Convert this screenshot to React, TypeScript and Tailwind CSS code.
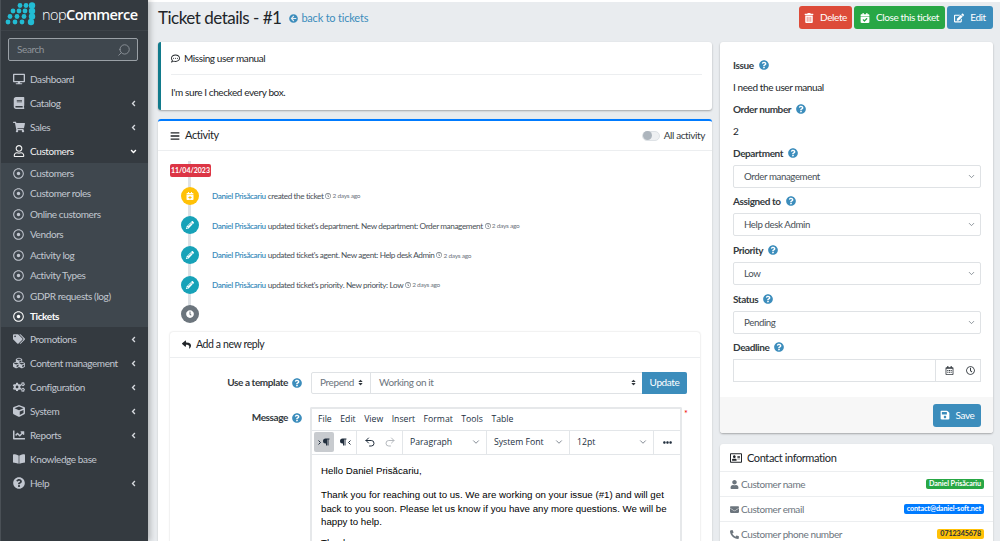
import React from "react";
import {
  FaDesktop, FaBook, FaShoppingCart, FaRegUser, FaTags, FaCubes, FaCogs, FaCube, FaChartLine, FaBookOpen, FaQuestionCircle,
  FaAngleLeft, FaAngleDown, FaRegDotCircle, FaTrashAlt, FaCalendarCheck, FaEdit, FaArrowCircleLeft, FaRegCommentDots, FaBars,
  FaCalendarPlus, FaPencilAlt, FaClock, FaReply, FaRegClock, FaRegCalendarAlt, FaSave, FaRegAddressCard, FaUser, FaEnvelope, FaPhone, FaEllipsisH, FaParagraph, FaSort,
} from "react-icons/fa";
import { ChevronDown, Search, Undo2, Redo2 } from "lucide-react";

function Logo() {
  const rows = [
    { y: 4.5, xs: [16, 22, 28] },
    { y: 10, xs: [9, 15, 21, 28] },
    { y: 15.5, xs: [6, 13, 20, 28] },
    { y: 21, xs: [4, 11, 18, 27] },
  ];
  return (
    <svg width="36" height="28" viewBox="0 0 36 28" className="shrink-0">
      {rows.map((r) =>
        r.xs.map((x) => (
          <circle key={`${x}-${r.y}`} cx={x} cy={r.y} r={x > 26 ? 3.2 : 2.4} fill="#22bcd4" />
        ))
      )}
    </svg>
  );
}

function NavItem({ icon, label, arrow, open }: { icon: React.ReactNode; label: string; arrow?: boolean; open?: boolean }) {
  return (
    <div className={`h-6 flex items-center pl-[12px] pr-[10px] text-[10px] ${open ? "text-[#f2f2f2]" : "text-[#c2c7d0]"}`}>
      <span className="w-[12px] h-3 flex items-center justify-center text-[12px] shrink-0">{icon}</span>
      <span className="ml-[5px] flex-1 whitespace-nowrap">{label}</span>
      {arrow && (open ? <FaAngleDown className="text-[9px] text-white" /> : <FaAngleLeft className="text-[9px] text-[#d5d8dd]" />)}
    </div>
  );
}

function SubItem({ label, active }: { label: string; active?: boolean }) {
  return (
    <div className={`h-[20.5px] flex items-center pl-[12px] text-[10px] ${active ? "text-white font-bold" : "text-[#c2c7d0]"}`}>
      <FaRegDotCircle className="text-[11px] w-[11px] shrink-0" />
      <span className="ml-[6px] whitespace-nowrap">{label}</span>
    </div>
  );
}

function Sidebar() {
  return (
    <aside className="w-[148px] shrink-0 h-full bg-[#343a40] shadow-[2px_0_6px_rgba(0,0,0,0.25)] z-10 flex flex-col border-l border-[#4a5056]">
      <div className="h-[31px] flex items-center pl-[3px] border-b border-[#3d4349]">
        <Logo />
        <span className="text-[14.5px] text-white ml-[2px] whitespace-nowrap font-['Open_Sans',sans-serif] tracking-[-0.55px]">
          <span className="font-light">nop</span><span className="font-semibold">Commerce</span>
        </span>
      </div>
      <div className="mt-[7px] ml-[7px] mr-[10px] h-[23px] border border-[#9aa0a6] rounded-[2px] bg-[#3f474e] flex items-center pl-2 pr-1.5 text-[10px] text-[#8f959b]">
        <span className="flex-1">Search</span>
        <Search size={14} strokeWidth={1.5} className="-scale-x-100" />
      </div>
      <div className="mt-[6px]">
        <NavItem icon={<FaDesktop />} label="Dashboard" />
        <NavItem icon={<FaBook />} label="Catalog" arrow />
        <NavItem icon={<FaShoppingCart />} label="Sales" arrow />
        <NavItem icon={<FaRegUser />} label="Customers" arrow open />
        <div className="bg-[#3f474e]">
          {["Customers", "Customer roles", "Online customers", "Vendors", "Activity log", "Activity Types", "GDPR requests (log)"].map((l) => (
            <SubItem key={l} label={l} />
          ))}
          <SubItem label="Tickets" active />
        </div>
        <NavItem icon={<FaTags />} label="Promotions" arrow />
        <NavItem icon={<FaCubes />} label="Content management" arrow />
        <NavItem icon={<FaCogs />} label="Configuration" arrow />
        <NavItem icon={<FaCube />} label="System" arrow />
        <NavItem icon={<FaChartLine />} label="Reports" arrow />
        <NavItem icon={<FaBookOpen />} label="Knowledge base" />
        <NavItem icon={<FaQuestionCircle />} label="Help" arrow />
      </div>
    </aside>
  );
}

function Help() {
  return <FaQuestionCircle className="text-[#3c8dbc] text-[10px] shrink-0" />;
}

function Btn({ color, icon, label, w }: { color: string; icon: React.ReactNode; label: string; w: string }) {
  return (
    <div className={`h-[23px] rounded-[3px] text-white text-[10px] flex items-center justify-center gap-[6px] whitespace-nowrap ${color} ${w}`}>
      <span className="text-[10px]">{icon}</span>
      {label}
    </div>
  );
}

function TimelineRow({ color, icon, children }: { color: string; icon: React.ReactNode; children?: React.ReactNode }) {
  return (
    <div className="h-[29.6px] flex items-center">
      <div className={`w-[18px] h-[18px] rounded-full flex items-center justify-center text-white text-[8px] shrink-0 ${color}`}>{icon}</div>
      <div className="ml-[13px] text-[8.2px] text-[#495057] whitespace-nowrap flex items-center pt-[1px]">{children}</div>
    </div>
  );
}

function Entry({ text }: { text: string }) {
  return (
    <>
      <span className="text-[#3c8dbc] font-semibold">Daniel Prisăcariu</span>
      <span className="ml-[2px]">{text}</span>
      <FaRegClock className="ml-[2px] text-[6px] text-[#6c757d]" />
      <span className="ml-[1px] text-[6.5px] text-[#6c757d] tracking-[-0.25px]">2 days ago</span>
    </>
  );
}

function Chev({ flip }: { flip?: boolean }) {
  return (
    <svg width="3" height="5" viewBox="0 0 3 5" className={flip ? "rotate-180" : ""}>
      <path d="M0.5 0.5 L2.5 2.5 L0.5 4.5" fill="none" stroke="currentColor" strokeWidth="1" />
    </svg>
  );
}

function ToolSelect({ label, w }: { label: string; w: string }) {
  return (
    <div className={`border-r border-[#e3e6e9] h-full flex items-center pl-[7px] pr-[5px] justify-between ${w}`}>
      <span>{label}</span>
      <ChevronDown size={10} className="text-[#6b7480]" />
    </div>
  );
}

function Editor() {
  const seg = "border-r border-[#e3e6e9] h-full flex items-center";
  return (
    <div className="w-[372px] h-[200px] border-2 border-[#e6e8ea] border-b-0 rounded-t-[2px] bg-white overflow-hidden tracking-normal">
      <div className="h-[22px] flex items-center gap-[8.5px] pl-[6px] text-[8.7px] text-[#222f3e] border-b border-[#e3e6e9] font-['Open_Sans',sans-serif]">
        {["File", "Edit", "View", "Insert", "Format", "Tools", "Table"].map((m) => (
          <span key={m}>{m}</span>
        ))}
      </div>
      <div className="h-[24px] flex items-center text-[8.7px] text-[#222f3e] border-b border-[#e3e6e9] font-['Open_Sans',sans-serif]">
        <div className={`${seg} w-[45px] pl-[2px] gap-[1px]`}>
          <span className="w-5 h-5 bg-[#c8cbcf] rounded-[2px] flex items-center justify-center text-[8px] gap-[1px]"><Chev /><FaParagraph /></span>
          <span className="w-5 h-5 flex items-center justify-center text-[8px] gap-[1px]"><FaParagraph /><Chev flip /></span>
        </div>
        <div className={`${seg} w-[46px] pl-[7px] gap-[8px]`}>
          <Undo2 size={12} />
          <Redo2 size={12} className="text-[#b4b8bd]" />
        </div>
        <ToolSelect label="Paragraph" w="w-[84px]" />
        <ToolSelect label="System Font" w="w-[83px]" />
        <ToolSelect label="12pt" w="w-[84px]" />
        <div className="flex-1 flex items-center justify-center"><FaEllipsisH className="text-[9px]" /></div>
      </div>
      <div className="pt-[9px] px-[9px] text-[9.7px] leading-[13.5px] text-black font-['Liberation_Sans',sans-serif]">
        <p>Hello Daniel Prisăcariu,</p>
        <p className="mt-[11px]">Thank you for reaching out to us. We are working on your issue (#1) and will get back to you soon. Please let us know if you have any more questions. We will be happy to help.</p>
        <p className="mt-[7px]">Thanks</p>
      </div>
    </div>
  );
}

function Field({ label, children }: { label: string; children: React.ReactNode }) {
  return (
    <div>
      <div className="h-[14px] flex items-center gap-[5px] text-[10px] font-bold text-[#343a40]">
        {label} <Help />
      </div>
      {children}
    </div>
  );
}

function Select({ value }: { value: string }) {
  return (
    <div className="mt-[5px] h-[23px] border border-[#dfe2e5] rounded-[2px] flex items-center pl-2.5 pr-1 text-[9.7px] text-[#495057]">
      <span className="flex-1">{value}</span>
      <ChevronDown size={9} strokeWidth={2} className="text-[#6c757d]" />
    </div>
  );
}

function ContactRow({ icon, label, badge, color, dark }: { icon: React.ReactNode; label: string; badge: string; color: string; dark?: boolean }) {
  return (
    <div className="h-[25px] border-t border-[#eceef0] flex items-center pl-[10px] pr-[9px] text-[10px] text-[#6c757d]">
      <span className="text-[9px] w-[9px]">{icon}</span>
      <span className="ml-[2px] flex-1">{label}</span>
      <span className={`h-[10px] px-[3px] rounded-[2px] flex items-center text-[7.2px] font-bold tracking-[-0.1px] ${color} ${dark ? "text-[#1f2d3d]" : "text-white"}`}>{badge}</span>
    </div>
  );
}

export default function App() {
  return (
    <div className="w-[1000px] h-[541px] overflow-hidden flex bg-[#e9ecef] tracking-[-0.4px] font-['Lato','Noto_Sans',sans-serif]">
      <Sidebar />
      <main className="flex-1 min-w-0 h-full pl-[10px] pr-[7px] border-t-2 border-white">
        <div className="h-[40px] flex items-start">
          <div className="flex items-center mt-[4px]">
            <h1 className="text-[17px] leading-6 text-[#212529] whitespace-nowrap tracking-[-0.5px]">Ticket details - #1</h1>
            <FaArrowCircleLeft className="ml-[8px] text-[9px] text-[#3c8dbc]" />
            <span className="ml-[3px] text-[11px] text-[#3c8dbc] whitespace-nowrap tracking-[-0.2px]">back to tickets</span>
          </div>
          <div className="ml-auto flex gap-[2px] mt-[4px]">
            <Btn color="bg-[#dd4b39]" icon={<FaTrashAlt />} label="Delete" w="w-[53px]" />
            <Btn color="bg-[#28a745]" icon={<FaCalendarCheck />} label="Close this ticket" w="w-[91px]" />
            <Btn color="bg-[#3c8dbc]" icon={<FaEdit />} label="Edit" w="w-[46px]" />
          </div>
        </div>
        <div className="flex gap-2">
          <div className="w-[554px] shrink-0">
            <section className="h-[68px] bg-white rounded-[3px] border-l-[3px] border-[#117a8b] shadow-[0_1px_2px_rgba(0,0,0,0.3)] px-[10px] text-[10px] text-[#212529]">
              <div className="h-[33px] flex items-center gap-[4px] border-b border-[#eceef0]">
                <FaRegCommentDots className="text-[9px]" /> Missing user manual
              </div>
              <div className="h-[34px] flex items-center">I'm sure I checked every box.</div>
            </section>
            <section className="mt-[9px] h-[430px] bg-white rounded-t-[3px] border-t-2 border-[#007bff] shadow-[0_1px_2px_rgba(0,0,0,0.2)]">
              <div className="h-[30px] flex items-center pl-3 pr-[7px] border-b border-[#eceef0] text-[#212529]">
                <FaBars className="text-[10px]" />
                <span className="ml-[5px] text-[11px] flex-1">Activity</span>
                <span className="w-[18px] h-[10px] rounded-full border border-[#dee2e6] bg-[#eef0f2] flex items-center">
                  <span className="w-[9px] h-[9px] rounded-full bg-[#adb5bd]" />
                </span>
                <span className="ml-[4px] text-[10px] text-[#343a40]">All activity</span>
              </div>
              <div className="px-3 relative">
                <div className="absolute left-[30px] top-[10px] h-[150px] w-[3px] bg-[#dee2e6]" />
                <div className="relative pt-[13px]">
                  <div className="w-[41px] h-[13px] bg-[#dc3545] rounded-[2px] text-white text-[7px] font-bold tracking-normal flex items-center justify-center">11/04/2023</div>
                  <div className="pl-[11px] mt-[4px]">
                    <TimelineRow color="bg-[#ffc107]" icon={<FaCalendarPlus />}><Entry text="created the ticket" /></TimelineRow>
                    <TimelineRow color="bg-[#17a2b8]" icon={<FaPencilAlt />}><Entry text="updated ticket's department. New department: Order management" /></TimelineRow>
                    <TimelineRow color="bg-[#17a2b8]" icon={<FaPencilAlt />}><Entry text="updated ticket's agent. New agent: Help desk Admin" /></TimelineRow>
                    <TimelineRow color="bg-[#17a2b8]" icon={<FaPencilAlt />}><Entry text="updated ticket's priority. New priority: Low" /></TimelineRow>
                    <TimelineRow color="bg-[#6c757d]" icon={<FaClock />} />
                  </div>
                </div>
                <div className="relative mt-[3px] bg-white rounded-[3px] shadow-[0_0_2px_rgba(0,0,0,0.2)]">
                  <div className="h-[26px] flex items-center pl-[12px] gap-[5px] pt-[1px] border-b border-[#eceef0] text-[10.5px] text-[#212529]">
                    <FaReply className="text-[9px]" /> Add a new reply
                  </div>
                  <div className="flex items-center mt-[14px] h-[22px]">
                    <div className="w-[132px] flex justify-end items-center gap-[4px] text-[10px] font-bold text-[#343a40]">Use a template <Help /></div>
                    <div className="ml-[9px] flex h-[22px] w-[376px] border border-[#dfe2e5] rounded-[2px] text-[10px] text-[#6c757d]">
                      <div className="w-[59px] border-r border-[#dfe2e5] flex items-center pl-2 pr-[6px] justify-between">Prepend <FaSort className="text-[7px] text-[#343a40]" /></div>
                      <div className="flex-1 flex items-center pl-2 pr-[5px] justify-between">Working on it <FaSort className="text-[7px] text-[#343a40]" /></div>
                      <div className="w-[45px] -my-px -mr-px bg-[#3c8dbc] rounded-r-[2px] text-white flex items-center justify-center text-[10px]">Update</div>
                    </div>
                  </div>
                  <div className="flex mt-[13px]">
                    <div className="w-[132px] h-[22px] flex justify-end items-center gap-[4px] text-[10px] font-bold text-[#343a40]">Message <Help /></div>
                    <div className="ml-[8px]"><Editor /></div>
                    <span className="ml-[2px] text-[#e00] text-[9px]">*</span>
                  </div>
                </div>
              </div>
            </section>
          </div>
          <div className="flex-1 min-w-0">
            <section className="h-[391px] bg-white rounded-[3px] shadow-[0_1px_2px_rgba(0,0,0,0.3)] flex flex-col">
              <div className="flex-1 pl-[13px] pr-3 pt-[16px] text-[10px] text-[#212529]">
                <Field label="Issue"><div className="mt-[8px] h-[14px] flex items-center">I need the user manual</div></Field>
                <div className="mt-[8px]"><Field label="Order number"><div className="mt-[8px] h-[14px] flex items-center">2</div></Field></div>
                <div className="mt-[8px]"><Field label="Department"><Select value="Order management" /></Field></div>
                <div className="mt-[6px]"><Field label="Assigned to"><Select value="Help desk Admin" /></Field></div>
                <div className="mt-[7px]"><Field label="Priority"><Select value="Low" /></Field></div>
                <div className="mt-[7px]"><Field label="Status"><Select value="Pending" /></Field></div>
                <div className="mt-[6px]">
                  <Field label="Deadline">
                    <div className="mt-[5px] h-[23px] border border-[#dfe2e5] flex items-center">
                      <span className="w-[202px] h-full border-r border-[#dfe2e5]" />
                      <FaRegCalendarAlt className="ml-[9px] text-[9px] text-[#343a40]" />
                      <FaRegClock className="ml-[12px] text-[9px] text-[#343a40]" />
                    </div>
                  </Field>
                </div>
              </div>
              <div className="h-[36px] bg-[#f7f7f7] rounded-b-[3px] flex items-center justify-end px-3">
                <Btn color="bg-[#3c8dbc]" icon={<FaSave />} label="Save" w="w-[48px]" />
              </div>
            </section>
            <section className="mt-[11px] bg-white rounded-t-[3px] shadow-[0_1px_2px_rgba(0,0,0,0.2)]">
              <div className="h-[27px] flex items-center gap-[5px] px-[10px] text-[11px] text-[#212529] pt-[1px]">
                <FaRegAddressCard className="text-[12px]" /> Contact information
              </div>
              <ContactRow icon={<FaUser />} label="Customer name" badge="Daniel Prisăcariu" color="bg-[#28a745]" />
              <ContactRow icon={<FaEnvelope />} label="Customer email" badge="contact@daniel-soft.net" color="bg-[#007bff]" />
              <ContactRow icon={<FaPhone className="-scale-x-100" />} label="Customer phone number" badge="0712345678" color="bg-[#ffc107]" dark />
            </section>
          </div>
        </div>
      </main>
    </div>
  );
}
